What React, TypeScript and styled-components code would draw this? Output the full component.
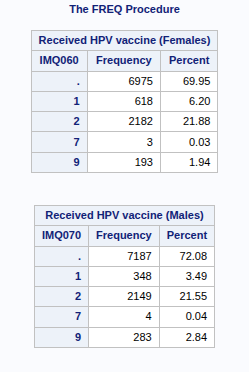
import React from "react";
import styled, { createGlobalStyle } from "styled-components";

const GlobalStyle = createGlobalStyle`
  html, body {
    margin: 0;
    padding: 0;
    background: #fafbfe;
  }
  body {
    font-family: "Liberation Sans", Arial, sans-serif;
  }
`;

type FreqRow = { level: string; frequency: number; percent: string };

type FreqTableData = {
  label: string;
  variable: string;
  rows: FreqRow[];
};

const tables: FreqTableData[] = [
  {
    label: "Received HPV vaccine (Females)",
    variable: "IMQ060",
    rows: [
      { level: ".", frequency: 6975, percent: "69.95" },
      { level: "1", frequency: 618, percent: "6.20" },
      { level: "2", frequency: 2182, percent: "21.88" },
      { level: "7", frequency: 3, percent: "0.03" },
      { level: "9", frequency: 193, percent: "1.94" },
    ],
  },
  {
    label: "Received HPV vaccine (Males)",
    variable: "IMQ070",
    rows: [
      { level: ".", frequency: 7187, percent: "72.08" },
      { level: "1", frequency: 348, percent: "3.49" },
      { level: "2", frequency: 2149, percent: "21.55" },
      { level: "7", frequency: 4, percent: "0.04" },
      { level: "9", frequency: 283, percent: "2.84" },
    ],
  },
];

// Page layout
const Page = styled.div`
  display: flex;
  flex-direction: column;
  align-items: center;
  padding: 3px 8px 20px;
`;

const ProcTitle = styled.div`
  font-size: 11px;
  font-weight: bold;
  color: #112277;
  line-height: 13px;
  margin-bottom: 14px;
`;

const Table = styled.table<{ gap?: number }>`
  border-collapse: separate;
  border-spacing: 0;
  border-top: 1px solid #c1c1c1;
  border-left: 1px solid #c1c1c1;
  margin-bottom: ${({ gap }) => gap || 0}px;
  font-size: 11px;
`;

const Cell = styled.td<{ header?: boolean; align?: string }>`
  border-right: 1px solid #c1c1c1;
  border-bottom: 1px solid #c1c1c1;
  padding: 3.1px 7px 3.2px;
  line-height: 13px;
  white-space: nowrap;
  text-align: ${({ align }) => align || "right"};
  font-weight: ${({ header }) => (header ? "bold" : "normal")};
  color: ${({ header }) => (header ? "#112277" : "#000000")};
  background: ${({ header }) => (header ? "#edf2f9" : "#ffffff")};
`;

const FreqTable: React.FC<{ data: FreqTableData; gap?: number }> = ({
  data,
  gap,
}) => (
  <Table gap={gap}>
    <thead>
      <tr>
        <Cell as="th" header align="center" colSpan={3}>
          {data.label}
        </Cell>
      </tr>
      <tr>
        <Cell as="th" header align="center">
          {data.variable}
        </Cell>
        <Cell as="th" header align="center">
          Frequency
        </Cell>
        <Cell as="th" header align="center">
          Percent
        </Cell>
      </tr>
    </thead>
    <tbody>
      {data.rows.map((r) => (
        <tr key={r.level}>
          <Cell as="th" header>
            {r.level}
          </Cell>
          <Cell>{r.frequency}</Cell>
          <Cell>{r.percent}</Cell>
        </tr>
      ))}
    </tbody>
  </Table>
);

const App: React.FC = () => (
  <Page>
    <GlobalStyle />
    <ProcTitle>The FREQ Procedure</ProcTitle>
    <FreqTable data={tables[0]} gap={32} />
    <FreqTable data={tables[1]} />
  </Page>
);

export default App;
